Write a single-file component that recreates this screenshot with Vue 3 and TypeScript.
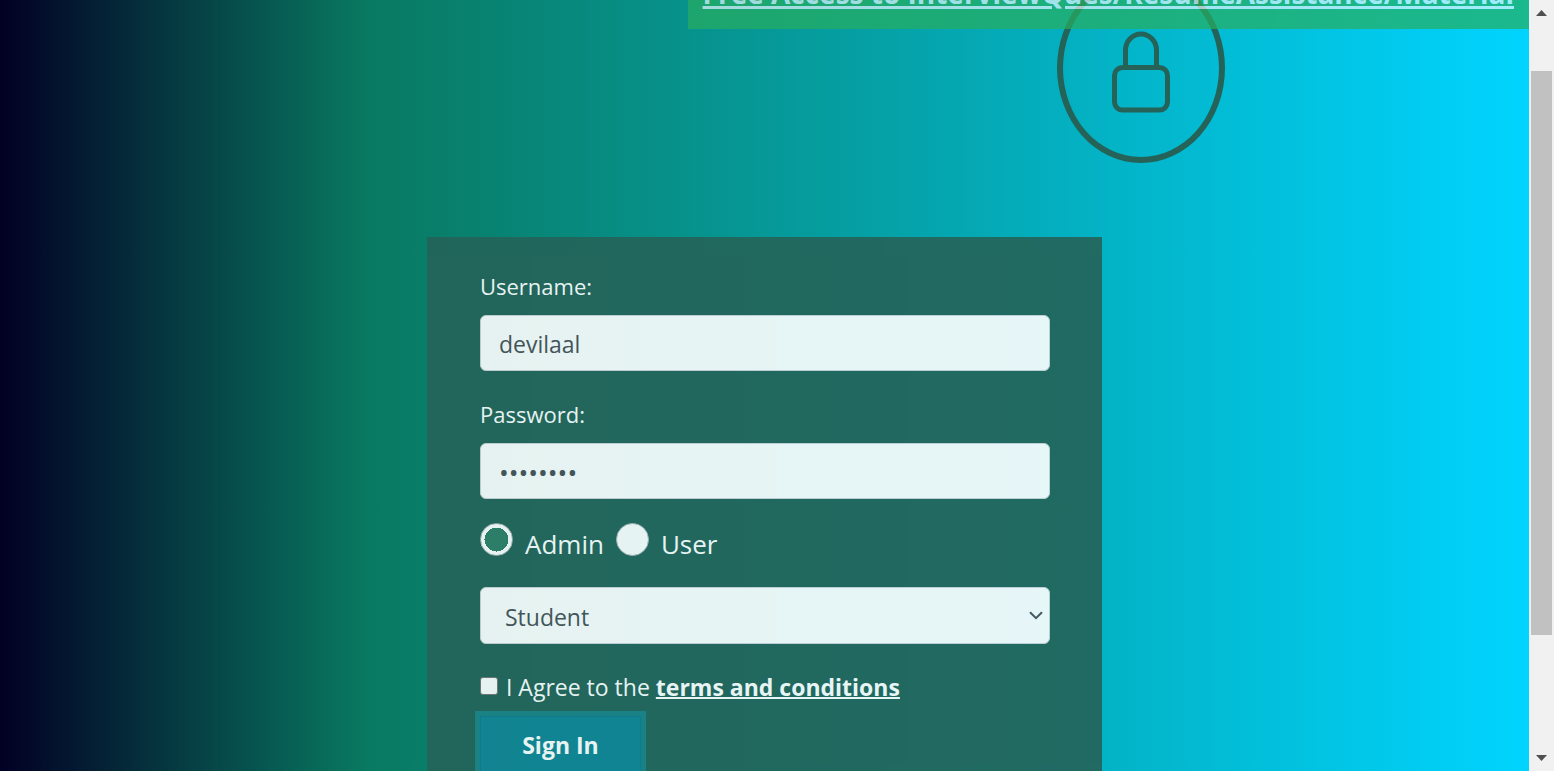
<script setup lang="ts">
import { ref } from 'vue'

const username = ref<string>('devilaal')
const password = ref<string>('password')
const account = ref<'admin' | 'user'>('admin')
const category = ref<string>('Student')
const agreed = ref<boolean>(false)
const categories: string[] = ['Student', 'Employee', 'Trainer']
</script>

<template>
  <div class="window">
    <div class="page">
      <header class="banner">
        <a href="#resources">Free Access to InterviewQues/ResumeAssistance/Material</a>
      </header>

      <div class="lock-row">
        <div class="lock-badge">
          <svg viewBox="0 0 58 82" width="58" height="82" aria-hidden="true">
            <path d="M13.5 36V19.5a15.5 16.5 0 0 1 31 0V36" />
            <rect x="2.5" y="36.5" width="53" height="42.5" rx="8" />
          </svg>
        </div>
      </div>

      <form class="login" @submit.prevent>
        <label class="field-label" for="username">Username:</label>
        <input id="username" v-model="username" class="control" type="text" />

        <label class="field-label spaced" for="password">Password:</label>
        <input id="password" v-model="password" class="control" type="password" />

        <div class="roles">
          <input id="admin" v-model="account" type="radio" name="role" value="admin" />
          <label for="admin">Admin</label>
          <input id="user" v-model="account" type="radio" name="role" value="user" />
          <label for="user">User</label>
        </div>

        <div class="select-wrap">
          <select v-model="category" class="control" aria-label="Category">
            <option v-for="item in categories" :key="item">{{ item }}</option>
          </select>
          <svg viewBox="0 0 14 9" width="14" height="9" aria-hidden="true">
            <path d="M1 1.2l6 6 6-6" />
          </svg>
        </div>

        <div class="agree">
          <input id="agree" v-model="agreed" type="checkbox" />
          <label for="agree">I Agree to the <a href="#terms">terms and conditions</a></label>
        </div>

        <button class="sign-in" type="submit">Sign In</button>
      </form>
    </div>

    <div class="scrollbar" aria-hidden="true">
      <div class="arrow"><svg viewBox="0 0 11 6" width="11" height="6"><path d="M5.5 0L11 6H0z" /></svg></div>
      <div class="track">
        <div class="before"></div>
        <div class="thumb"></div>
        <div class="after"></div>
      </div>
      <div class="arrow"><svg viewBox="0 0 11 6" width="11" height="6"><path d="M0 0h11L5.5 6z" /></svg></div>
    </div>
  </div>
</template>

<style>
body {
  margin: 0;
}
</style>

<style scoped>
* {
  box-sizing: border-box;
}

.window {
  display: flex;
  height: 100vh;
  overflow: hidden;
  font-family: "Segoe UI", "Open Sans", "Noto Sans", sans-serif;
  font-size: 23px;
  line-height: 36px;
}

.page {
  flex: 1;
  min-width: 0;
  overflow: hidden;
  background: linear-gradient(90deg, #020024 0%, #097961 24%, #00d4ff 100%);
}

.banner {
  position: relative;
  z-index: 1;
  display: flex;
  justify-content: flex-end;
  margin-top: -43px;
  margin-left: 45%;
  padding: 12px 15px;
  background: #27ae60;
  opacity: 0.7;
  font-size: 28px;
  font-weight: 700;
  line-height: 48px;
  white-space: nowrap;
}

.banner a {
  color: #e4f8ff;
  text-decoration-thickness: 3px;
}

.lock-row {
  margin-top: -56px;
  padding-left: 69.1%;
}

.lock-badge {
  display: flex;
  align-items: center;
  justify-content: center;
  width: 168px;
  height: 190px;
  border: 6px solid #256359;
  border-radius: 50%;
}

.lock-badge svg {
  margin-top: 8px;
  fill: none;
  stroke: #256359;
  stroke-width: 5;
}

.login {
  width: 44.15%;
  min-height: 600px;
  margin: 74px auto 0;
  padding: 32px 52px 32px 53px;
  background: #256359;
  color: #fff;
  opacity: 0.9;
}

.field-label {
  display: block;
  margin-bottom: 12px;
  font-size: 22px;
  line-height: 34px;
}

.spaced {
  margin-top: 26px;
}

.control {
  display: block;
  width: 100%;
  height: 56px;
  margin: 0;
  padding: 2px 18px 0;
  border: 1px solid #ced4da;
  border-radius: 6px;
  background: #fff;
  color: #495057;
  font: inherit;
  outline: none;
}

.control[type="password"] {
  font-size: 26px;
}

.roles {
  display: flex;
  align-items: flex-start;
  height: 40px;
  margin: 24px 0;
  font-size: 26px;
  line-height: 42px;
}

.roles input {
  flex: none;
  width: 33px;
  height: 33px;
  margin: 0 12px 0 0;
  border: 1px solid #adb5b5;
  border-radius: 50%;
  background: #fff;
  appearance: none;
}

.roles input:checked {
  background: radial-gradient(circle, #307e67 12px, #fff 12px);
}

.roles label {
  margin-right: 12px;
}

.select-wrap {
  position: relative;
}

select.control {
  height: 57px;
  padding: 3px 24px 0;
  appearance: none;
}

.select-wrap svg {
  position: absolute;
  top: 24px;
  right: 7px;
  fill: none;
  stroke: #495057;
  stroke-width: 2;
  pointer-events: none;
}

.agree {
  display: flex;
  align-items: center;
  margin: 25px 0 11px;
}

.agree input {
  width: 18px;
  height: 18px;
  margin: 0 8px 3px 0;
  border: 1px solid #767676;
  border-radius: 3px;
  background: #fff;
  appearance: none;
}

.agree a {
  color: #fff;
  font-weight: 700;
  text-decoration-thickness: 2px;
}

.sign-in {
  display: block;
  width: 161px;
  height: 58px;
  padding: 0;
  border: 1px solid #117a8b;
  background: #138496;
  box-shadow: 0 0 0 5px rgba(22, 160, 182, 0.5);
  color: #fff;
  font: inherit;
  font-weight: 700;
}

.scrollbar {
  display: flex;
  flex: none;
  flex-direction: column;
  width: 25px;
  background: #f1f1f1;
}

.arrow {
  display: flex;
  align-items: center;
  justify-content: center;
  height: 26px;
}

.arrow svg {
  fill: #505050;
}

.track {
  display: flex;
  flex: 1;
  flex-direction: column;
  padding: 0 2px;
}

.before {
  flex: 45;
}

.thumb {
  flex: 564;
  background: #c1c1c1;
}

.after {
  flex: 110;
}
</style>
